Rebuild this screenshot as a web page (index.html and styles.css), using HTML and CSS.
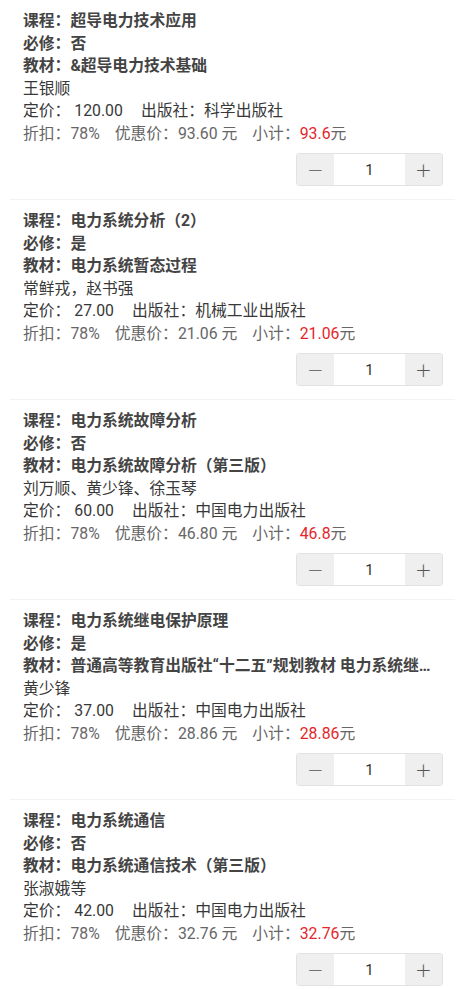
FILE: index.html
```html
<!DOCTYPE html>
<html lang="zh-CN">
<head>
    <meta charset="UTF-8">
    <meta name="viewport" content="width=device-width, initial-scale=1.0">
    <title>教材订购</title>
    <link rel="stylesheet" href="styles.css">
</head>
<body>
    <!-- Book list -->
    <div class="book-list">
        <div class="book">
            <div class="line strong">课程：超导电力技术应用</div>
            <div class="line strong">必修：否</div>
            <div class="line strong">教材：&amp;超导电力技术基础</div>
            <div class="line">王银顺</div>
            <div class="line">定价：&nbsp;120.00<span class="press">出版社：科学出版社</span></div>
            <div class="line muted">折扣：78%<span class="sep">优惠价：93.60 元</span><span class="sep">小计：<span class="total">93.6</span>元</span></div>
            <div class="stepper-row">
                <div class="stepper">
                    <button class="step-btn">&minus;</button>
                    <input class="step-input" type="text" value="1">
                    <button class="step-btn">+</button>
                </div>
            </div>
        </div>

        <div class="book">
            <div class="line strong">课程：电力系统分析（2）</div>
            <div class="line strong">必修：是</div>
            <div class="line strong">教材：电力系统暂态过程</div>
            <div class="line">常鲜戎，赵书强</div>
            <div class="line">定价：&nbsp;27.00<span class="press">出版社：机械工业出版社</span></div>
            <div class="line muted">折扣：78%<span class="sep">优惠价：21.06 元</span><span class="sep">小计：<span class="total">21.06</span>元</span></div>
            <div class="stepper-row">
                <div class="stepper">
                    <button class="step-btn">&minus;</button>
                    <input class="step-input" type="text" value="1">
                    <button class="step-btn">+</button>
                </div>
            </div>
        </div>

        <div class="book">
            <div class="line strong">课程：电力系统故障分析</div>
            <div class="line strong">必修：否</div>
            <div class="line strong">教材：电力系统故障分析（第三版）</div>
            <div class="line">刘万顺、黄少锋、徐玉琴</div>
            <div class="line">定价：&nbsp;60.00<span class="press">出版社：中国电力出版社</span></div>
            <div class="line muted">折扣：78%<span class="sep">优惠价：46.80 元</span><span class="sep">小计：<span class="total">46.8</span>元</span></div>
            <div class="stepper-row">
                <div class="stepper">
                    <button class="step-btn">&minus;</button>
                    <input class="step-input" type="text" value="1">
                    <button class="step-btn">+</button>
                </div>
            </div>
        </div>

        <div class="book">
            <div class="line strong">课程：电力系统继电保护原理</div>
            <div class="line strong">必修：是</div>
            <div class="line strong">教材：普通高等教育出版社“十二五”规划教材 电力系统继电保护原理</div>
            <div class="line">黄少锋</div>
            <div class="line">定价：&nbsp;37.00<span class="press">出版社：中国电力出版社</span></div>
            <div class="line muted">折扣：78%<span class="sep">优惠价：28.86 元</span><span class="sep">小计：<span class="total">28.86</span>元</span></div>
            <div class="stepper-row">
                <div class="stepper">
                    <button class="step-btn">&minus;</button>
                    <input class="step-input" type="text" value="1">
                    <button class="step-btn">+</button>
                </div>
            </div>
        </div>

        <div class="book">
            <div class="line strong">课程：电力系统通信</div>
            <div class="line strong">必修：否</div>
            <div class="line strong">教材：电力系统通信技术（第三版）</div>
            <div class="line">张淑娥等</div>
            <div class="line">定价：&nbsp;42.00<span class="press">出版社：中国电力出版社</span></div>
            <div class="line muted">折扣：78%<span class="sep">优惠价：32.76 元</span><span class="sep">小计：<span class="total">32.76</span>元</span></div>
            <div class="stepper-row">
                <div class="stepper">
                    <button class="step-btn">&minus;</button>
                    <input class="step-input" type="text" value="1">
                    <button class="step-btn">+</button>
                </div>
            </div>
        </div>
    </div>
</body>
</html>
```

FILE: styles.css
```css
* {
    box-sizing: border-box;
    margin: 0;
    padding: 0;
}

body {
    background: #fff;
    font-family: Roboto, "Noto Sans CJK SC", sans-serif;
    font-size: 15.8px;
    color: #383838;
}

/* Book list */
.book {
    margin: 0 10px;
    padding: 10px 12px 13px 13px;
    border-bottom: 1px solid #f3f3f3;
}

.line {
    line-height: 22.5px;
    white-space: nowrap;
    overflow: hidden;
    text-overflow: ellipsis;
}

.line.strong {
    font-weight: 700;
    color: #444;
    padding-right: 8px;
}

.line.muted {
    color: #666;
}

.press {
    margin-left: 18px;
}

.sep {
    margin-left: 15px;
}

.total {
    color: #e4262b;
}

/* Quantity stepper */
.stepper-row {
    display: flex;
    justify-content: flex-end;
    margin-top: 8px;
}

.stepper {
    display: flex;
    height: 33px;
    border: 1px solid #e2e2e2;
    border-radius: 3px;
    overflow: hidden;
}

.step-btn {
    width: 37px;
    border: none;
    background: #efefef;
    color: #555;
    font-family: "DejaVu Sans", sans-serif;
    font-size: 20px;
    font-weight: 300;
    line-height: 1;
    cursor: pointer;
}

.step-input {
    width: 71px;
    border: none;
    background: #fff;
    text-align: center;
    font-family: Roboto, sans-serif;
    font-size: 15px;
    color: #333;
    outline: none;
}
```
